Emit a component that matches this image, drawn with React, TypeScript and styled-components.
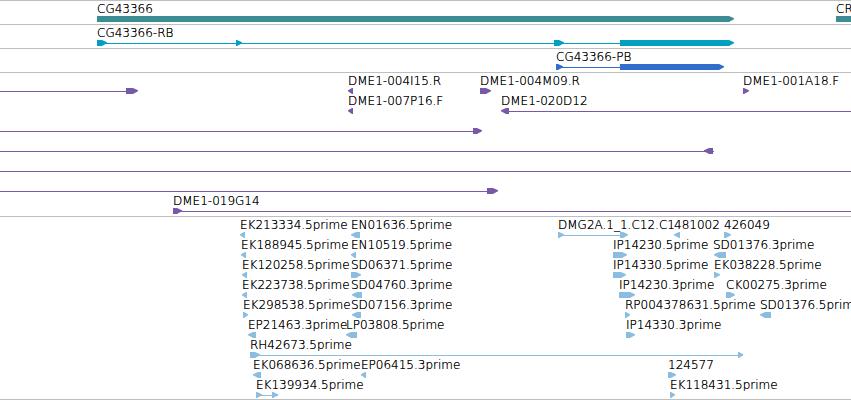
import React from "react";
import styled, { createGlobalStyle } from "styled-components";

const GlobalStyle = createGlobalStyle`
  body {
    margin: 0;
    background: #ffffff;
    color: #000000;
    font-family: "DejaVu Sans", sans-serif;
    font-size: 12px;
    font-weight: 200;
  }
`;

const Browser = styled.main`
  overflow: hidden;
  border-bottom: 1px solid #bfbfbf;
`;

const TrackPanel = styled.section<{ $last: boolean }>`
  border-top: 1px solid #bfbfbf;
  padding: 1px 0 ${(p) => (p.$last ? 1 : 2)}px;
`;

const Lane = styled.div`
  position: relative;
  height: 20px;
`;

/* A feature sits at its own coordinate along the sequence. */
const FeatureBox = styled.div`
  position: absolute;
  top: 0;
  display: flex;
  flex-direction: column;
`;

/* The zero-offset shadow darkens the thin strokes of the light face. */
const Label = styled.span`
  height: 14px;
  line-height: 14px;
  white-space: pre;
  text-shadow: 0 0 0 #000000;
`;

const Glyph = styled.svg<{ $color: string }>`
  display: block;
  height: 6px;
  fill: ${(p) => p.$color};
`;

type Kind = "right" | "left" | "block" | "line";
type Part = [Kind, number, number];
type Feature = { at: number; label?: string; parts: Part[] };
type Track = { name: string; color: string; lanes: Feature[][] };

/* Features that run past the visible region are clipped by the window. */
const FAR = 4000;

const f = (at: number, label: string, ...parts: Part[]): Feature => ({ at, label, parts });

const tracks: Track[] = [
  {
    name: "Genes",
    color: "#3c8d93",
    lanes: [[f(97, "CG43366", ["right", 97, 734]), f(836, "CR", ["block", 836, FAR])]],
  },
  {
    name: "Transcripts",
    color: "#029fc0",
    lanes: [
      [
        f(
          97,
          "CG43366-RB",
          ["line", 97, 620],
          ["right", 97, 107],
          ["right", 236, 242],
          ["right", 554, 564],
          ["right", 620, 734],
        ),
      ],
    ],
  },
  {
    name: "Proteins",
    color: "#306dcd",
    lanes: [[f(556, "CG43366-PB", ["line", 556, 620], ["right", 556, 563], ["right", 620, 724])]],
  },
  {
    name: "Clones",
    color: "#7759a8",
    lanes: [
      [
        f(0, "", ["line", 0, 126], ["right", 126, 138]),
        f(348, "DME1-004I15.R", ["left", 348, 353]),
        f(480, "DME1-004M09.R", ["right", 480, 491]),
        f(743, "DME1-001A18.F", ["right", 743, 749]),
      ],
      [
        f(348, "DME1-007P16.F", ["left", 348, 353]),
        f(501, "DME1-020D12", ["left", 501, 509], ["line", 509, FAR]),
      ],
      [f(0, "", ["line", 0, 473], ["right", 473, 482])],
      [f(0, "", ["line", 0, 714], ["left", 704, 713])],
      [f(0, "", ["line", 0, FAR])],
      [f(0, "", ["line", 0, 487], ["right", 487, 498])],
      [f(173, "DME1-019G14", ["right", 173, 182], ["line", 173, FAR])],
    ],
  },
  {
    name: "ESTs",
    color: "#8abde0",
    lanes: [
      [
        f(240, "EK213334.5prime", ["left", 240, 245]),
        f(351, "EN01636.5prime", ["left", 351, 360]),
        f(558, "DMG2A.1_1.C12.C1", ["right", 558, 564], ["line", 558, 627], ["right", 620, 628]),
        f(674, "481002", ["left", 674, 680]),
        f(724, "426049", ["right", 724, 731]),
      ],
      [
        f(241, "EK188945.5prime", ["left", 241, 246]),
        f(351, "EN10519.5prime", ["left", 351, 356]),
        f(613, "IP14230.5prime", ["right", 613, 627]),
        f(713, "SD01376.3prime", ["left", 714, 726]),
      ],
      [
        f(242, "EK120258.5prime", ["left", 242, 247]),
        f(351, "SD06371.5prime", ["right", 351, 361]),
        f(613, "IP14330.5prime", ["right", 613, 626]),
        f(714, "EK038228.5prime", ["right", 714, 720]),
      ],
      [
        f(242, "EK223738.5prime", ["left", 242, 247]),
        f(351, "SD04760.3prime", ["left", 352, 362]),
        f(619, "IP14230.3prime", ["right", 619, 635]),
        f(726, "CK00275.3prime", ["right", 726, 735]),
      ],
      [
        f(243, "EK298538.5prime", ["right", 243, 248]),
        f(351, "SD07156.3prime", ["left", 352, 361]),
        f(625, "RP004378631.5prime", ["right", 625, 630]),
        f(760, "SD01376.5prime", ["left", 760, 771]),
      ],
      [
        f(248, "EP21463.3prime", ["left", 248, 256]),
        f(346, "LP03808.5prime", ["left", 346, 357]),
        f(626, "IP14330.3prime", ["right", 626, 635]),
      ],
      [f(250, "RH42673.5prime", ["line", 250, 743], ["right", 250, 260], ["right", 738, 743])],
      [
        f(253, "EK068636.5prime", ["left", 253, 261]),
        f(361, "EP06415.3prime", ["left", 361, 366]),
        f(668, "124577", ["right", 668, 676]),
      ],
      [
        f(256, "EK139934.5prime", ["line", 256, 278], ["right", 256, 262], ["right", 272, 278]),
        f(670, "EK118431.5prime", ["right", 670, 675]),
      ],
    ],
  },
];

function Shape({ kind, from, to }: { kind: Kind; from: number; to: number }) {
  if (kind === "line") return <rect x={from} y={3} width={to - from} height={1} />;
  if (kind === "block") return <rect x={from} y={0} width={to - from} height={6} />;
  const head = Math.min(to - from, 6);
  if (kind === "right") {
    return (
      <polygon
        points={`${from},0 ${to - head + 1},0 ${to},2.3 ${to},3.3 ${to - head + 1},6 ${from},6`}
      />
    );
  }
  return (
    <polygon
      points={`${to},0 ${from + head - 1},0 ${from},2.3 ${from},3.3 ${from + head - 1},6 ${to},6`}
    />
  );
}

function FeatureView({ feature, color }: { feature: Feature; color: string }) {
  const width = Math.max(...feature.parts.map((p) => p[2])) - feature.at;
  return (
    <FeatureBox style={{ left: feature.at }}>
      <Label>{feature.label}</Label>
      <Glyph $color={color} width={width} height={6} aria-hidden="true">
        {feature.parts.map(([kind, from, to], i) => (
          <Shape key={i} kind={kind} from={from - feature.at} to={to - feature.at} />
        ))}
      </Glyph>
    </FeatureBox>
  );
}

export default function App() {
  return (
    <>
      <GlobalStyle />
      <Browser>
        {tracks.map((track, t) => (
          <TrackPanel key={track.name} $last={t === tracks.length - 1} aria-label={track.name}>
            {track.lanes.map((lane, l) => (
              <Lane key={l}>
                {lane.map((feature, i) => (
                  <FeatureView key={i} feature={feature} color={track.color} />
                ))}
              </Lane>
            ))}
          </TrackPanel>
        ))}
      </Browser>
    </>
  );
}
